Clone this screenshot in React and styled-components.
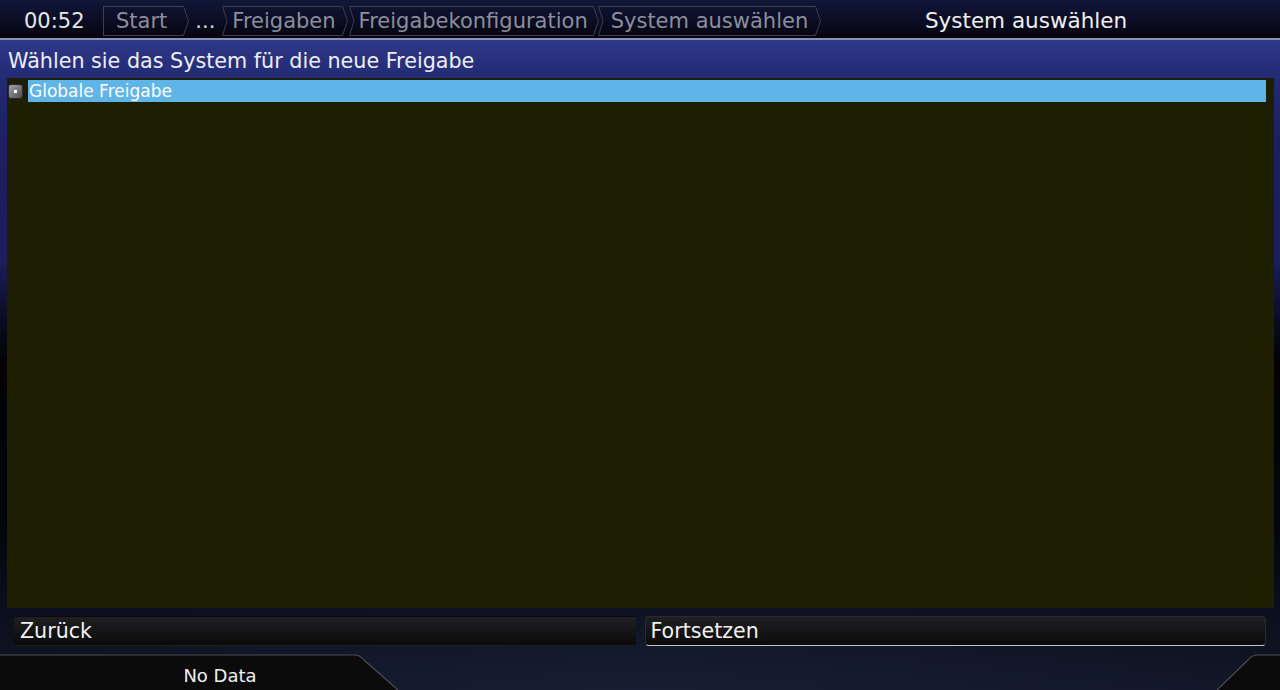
import React from "react";
import styled, { createGlobalStyle } from "styled-components";

const GlobalStyle = createGlobalStyle`
  html, body {
    margin: 0;
    padding: 0;
    background: #000;
  }
  * {
    box-sizing: border-box;
  }
`;

// breadcrumb segments, padding taken from the screenshot
const crumbs = [
  { label: "Start", boxed: true, notch: false, padL: 12, padR: 16, gap: 0 },
  { label: "...", boxed: false, padL: 6, padR: 7, gap: 0 },
  { label: "Freigaben", boxed: true, notch: true, padL: 4, padR: 6, gap: 0 },
  { label: "Freigabekonfiguration", boxed: true, notch: true, padL: 4, padR: 5, gap: 1 },
  { label: "System auswählen", boxed: true, notch: true, padL: 7, padR: 7, gap: -1 },
];

const LINE = "#3b4058";

const LeftNotch = () => (
  <EdgeSvg width="6" height="30" viewBox="0 0 6 30">
    <path d="M6 0.5 H0.5 L5 15 L0.5 29.5 H6" fill="none" stroke={LINE} strokeWidth="1" />
  </EdgeSvg>
);

const RightTip = () => (
  <EdgeSvg width="6" height="30" viewBox="0 0 6 30">
    <path d="M0 0.5 H0.5 L5.5 15 L0.5 29.5 H0" fill="none" stroke={LINE} strokeWidth="1" />
  </EdgeSvg>
);

const App = () => {
  return (
    <>
      <GlobalStyle />
      <Screen>
        <Header>
          <Clock>00:52</Clock>
          <Breadcrumbs>
            {crumbs.map((c) =>
              c.boxed ? (
                <Crumb key={c.label} $gap={c.gap}>
                  {c.notch && <LeftNotch />}
                  <CrumbBody $straight={!c.notch} $padL={c.padL} $padR={c.padR}>
                    {c.label}
                  </CrumbBody>
                  <RightTip />
                </Crumb>
              ) : (
                <Ellipsis key={c.label} $padL={c.padL} $padR={c.padR}>
                  {c.label}
                </Ellipsis>
              )
            )}
          </Breadcrumbs>
          <Title>System auswählen</Title>
        </Header>

        <Content>
          <Prompt>Wählen sie das System für die neue Freigabe</Prompt>
          <ListBox>
            <ListRow>
              <RowIcon>
                <span />
              </RowIcon>
              <RowLabel $selected>Globale Freigabe</RowLabel>
            </ListRow>
          </ListBox>
          <ButtonRow>
            <ActionButton>Zurück</ActionButton>
            <ActionButton $focused>Fortsetzen</ActionButton>
          </ButtonRow>
        </Content>

        <Footer>
          <LeftTab>
            <TabShape viewBox="0 0 400 36" preserveAspectRatio="none">
              <path d="M0 1 H355 Q360 1 364 6 L398 36 H0 Z" fill="#0b0b0c" />
              <path
                d="M0 1 H355 Q360 1 364 6 L398 36"
                fill="none"
                stroke="#4a4c52"
                strokeWidth="1.2"
              />
            </TabShape>
            <TabText>No Data</TabText>
          </LeftTab>
          <RightTab>
            <TabShape viewBox="0 0 66 36" preserveAspectRatio="none">
              <path d="M66 1 H43 Q38 1 34 6 L3 36 H66 Z" fill="#0b0b0c" />
              <path
                d="M66 1 H43 Q38 1 34 6 L3 36"
                fill="none"
                stroke="#4a4c52"
                strokeWidth="1.2"
              />
            </TabShape>
          </RightTab>
        </Footer>
      </Screen>
    </>
  );
};

export default App;

const Screen = styled.div`
  width: 1280px;
  height: 690px;
  display: flex;
  flex-direction: column;
  overflow: hidden;
  font-family: "DejaVu Sans", Verdana, sans-serif;
  background:
    radial-gradient(ellipse 700px 120px at 640px 690px, rgba(28, 36, 60, 0.55), rgba(0, 0, 0, 0) 100%),
    linear-gradient(
      to bottom,
      #2d3889 40px,
      #222a72 80px,
      #1c2062 140px,
      #1a1e5c 260px,
      #0b0c22 320px,
      #030306 360px,
      #04050a 520px,
      #0b0f1d 610px,
      #111727 690px
    );
`;

const Header = styled.div`
  height: 40px;
  flex-shrink: 0;
  display: flex;
  align-items: center;
  padding: 3px 0 0 24px;
  background: linear-gradient(to bottom, #121638 0%, #0a0c22 60%, #05060f 95%);
  border-bottom: 2px solid #8b90b4;
`;

const Clock = styled.div`
  color: #e6e6ea;
  font-size: 21px;
  width: 79px;
`;

const Breadcrumbs = styled.div`
  display: flex;
  align-items: center;
  height: 30px;
  width: 711px;
`;

const Crumb = styled.div`
  display: flex;
  height: 30px;
  margin-left: ${(p) => p.$gap}px;
`;

const EdgeSvg = styled.svg`
  display: block;
  flex-shrink: 0;
`;

const CrumbBody = styled.div`
  height: 30px;
  display: flex;
  align-items: center;
  padding: 0 ${(p) => p.$padR}px 0 ${(p) => p.$padL}px;
  border-top: 1px solid ${LINE};
  border-bottom: 1px solid ${LINE};
  border-left: ${(p) => (p.$straight ? `1px solid ${LINE}` : "none")};
  color: #8c8e9c;
  font-size: 21px;
  white-space: nowrap;
`;

const Ellipsis = styled.div`
  padding: 0 ${(p) => p.$padR}px 0 ${(p) => p.$padL}px;
  color: #d8d8de;
  font-size: 21px;
`;

const Title = styled.div`
  flex: 1;
  text-align: center;
  color: #f0f0f4;
  font-size: 21.5px;
  padding-right: 42px;
`;

const Content = styled.div`
  flex: 1;
  display: flex;
  flex-direction: column;
  padding: 0 6px 0 7px;
`;

const Prompt = styled.div`
  height: 38px;
  display: flex;
  align-items: center;
  padding: 4px 0 0 1px;
  color: #eeeef4;
  font-size: 20.7px;
`;

const ListBox = styled.div`
  height: 530px;
  background: #1e1e02;
  padding: 2px 8px 0 1px;
`;

const ListRow = styled.div`
  display: flex;
  align-items: center;
  height: 22px;
  gap: 5px;
`;

const RowIcon = styled.div`
  width: 15px;
  height: 15px;
  border-radius: 3px;
  background: linear-gradient(135deg, #a4a4a8, #4c4c50);
  border: 1px solid #2c2c30;
  display: flex;
  align-items: center;
  justify-content: center;

  span {
    width: 3px;
    height: 3px;
    background: #fff;
  }
`;

const RowLabel = styled.div`
  flex: 1;
  height: 22px;
  display: flex;
  align-items: center;
  padding-left: 1px;
  color: #ffffff;
  font-size: 17px;
  background: ${(p) => (p.$selected ? "#5fb4e8" : "transparent")};
`;

const ButtonRow = styled.div`
  display: flex;
  gap: 9px;
  padding: 8px 8px 0 7px;
`;

const ActionButton = styled.div`
  flex: 1;
  height: 30px;
  display: flex;
  align-items: center;
  padding-left: 5px;
  border-radius: 4px;
  color: #f2f2f2;
  font-size: 20.6px;
  background: linear-gradient(to bottom, #202022 0%, #151517 50%, #0a0a0b 100%);
  border: 1px solid ${(p) => (p.$focused ? "#2a2a30" : "transparent")};
  border-bottom: 1px solid ${(p) => (p.$focused ? "#c4c4cc" : "transparent")};
`;

const Footer = styled.div`
  height: 36px;
  flex-shrink: 0;
  display: flex;
  justify-content: space-between;
  align-items: stretch;
`;

const LeftTab = styled.div`
  position: relative;
  width: 400px;
  display: flex;
  align-items: center;
`;

const RightTab = styled.div`
  position: relative;
  width: 66px;
`;

const TabShape = styled.svg`
  position: absolute;
  inset: 0;
  width: 100%;
  height: 100%;
`;

const TabText = styled.span`
  position: relative;
  flex-shrink: 0;
  width: 440px;
  text-align: center;
  padding-top: 7px;
  color: #f0f0f0;
  font-size: 18px;
`;
